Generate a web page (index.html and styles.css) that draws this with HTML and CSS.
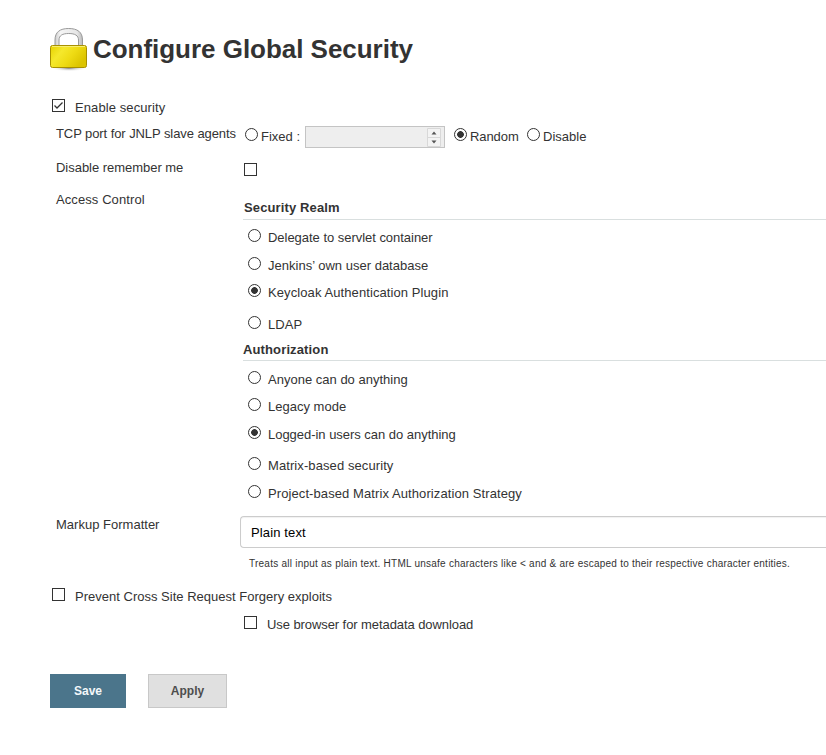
FILE: index.html
```html
<!DOCTYPE html>
<html lang="en">
<head>
<meta charset="utf-8">
<title>Configure Global Security</title>
<link rel="stylesheet" href="styles.css">
</head>
<body>
<main class="page">
  <header class="heading">
    <svg class="lock" width="40" height="44" viewBox="0 0 40 44" aria-hidden="true">
      <defs>
        <linearGradient id="brass" x1="0" y1="0" x2="1" y2="0.5">
          <stop offset="0" stop-color="#e6d200"/><stop offset=".35" stop-color="#f5e82c"/><stop offset=".65" stop-color="#eedb14"/><stop offset="1" stop-color="#dcc400"/>
        </linearGradient>
        <linearGradient id="steel" x1="0" y1="0" x2="1" y2="0">
          <stop offset="0" stop-color="#ccc"/><stop offset=".2" stop-color="#f5f5f5"/><stop offset=".8" stop-color="#e6e6e6"/><stop offset="1" stop-color="#bbb"/>
        </linearGradient>
        <radialGradient id="shade"><stop offset="0" stop-color="#777"/><stop offset="1" stop-color="#fff" stop-opacity="0"/></radialGradient>
      </defs>
      <ellipse cx="19" cy="40" rx="18" ry="3.5" fill="url(#shade)"/>
      <path d="M5 18V12C5 4 10 .5 18.700 .5S32.500 4 32.500 12V18H28.500V12C28.500 7.500 25 5.500 18.700 5.500S9 7.500 9 12V18Z" fill="url(#steel)" stroke="#999"/>
      <rect x=".5" y="17.500" width="36" height="22" rx="2" fill="url(#brass)" stroke="#a89000"/>
      <path d="M2 18.500H35" stroke="#f8ee70"/>
    </svg>
    <h1>Configure Global Security</h1>
  </header>

  <form class="settings">
    <label class="option enable"><span class="box"><svg class="tick" width="11" height="11" viewBox="0 0 11 11" aria-hidden="true"><path d="M1.500 5.500L4 8L9.500 2.500" fill="none" stroke="#333" stroke-width="1.300"/></svg></span><span class="fit-c">Enable security</span></label>

    <div class="row row-port">
      <div class="name fit-a">TCP port for JNLP slave agents</div>
      <div class="ports">
        <label class="tight"><span class="radio"></span>Fixed :</label>
        <span class="number">
          <svg width="14" height="19" viewBox="0 0 14 19" aria-hidden="true"><path d="M.5 .5H13.500V18.500H.5ZM.5 9.500H13.500" fill="#f3f3f3" stroke="#d8d8d8"/><path d="M4.500 6.500L7 3.500L9.500 6.500ZM4.500 12.500L7 15.500L9.500 12.500Z" fill="#555"/></svg>
        </span>
        <label class="tight random fit-a"><span class="radio on"></span>Random</label>
        <label class="tight disable"><span class="radio"></span>Disable</label>
      </div>
    </div>

    <div class="row row-remember">
      <div class="name fit-b">Disable remember me</div>
      <span class="box"></span>
    </div>

    <div class="row row-access">
      <div class="name fit-c">Access Control</div>
      <div class="groups">
        <section class="realm">
          <h2>Security Realm</h2>
          <label class="option"><span class="radio"></span><span class="fit-b">Delegate to servlet container</span></label>
          <label class="option"><span class="radio"></span><span>Jenkins’ own user database</span></label>
          <label class="option"><span class="radio on"></span><span class="fit-c">Keycloak Authentication Plugin</span></label>
          <label class="option"><span class="radio"></span><span class="fit-c">LDAP</span></label>
        </section>
        <section class="authorization">
          <h2>Authorization</h2>
          <label class="option"><span class="radio"></span><span>Anyone can do anything</span></label>
          <label class="option"><span class="radio"></span><span>Legacy mode</span></label>
          <label class="option"><span class="radio on"></span><span class="fit-b">Logged-in users can do anything</span></label>
          <label class="option"><span class="radio"></span><span class="fit-c">Matrix-based security</span></label>
          <label class="option"><span class="radio"></span><span class="fit-c">Project-based Matrix Authorization Strategy</span></label>
        </section>
      </div>
    </div>

    <div class="row row-markup">
      <div class="name">Markup Formatter</div>
      <div class="formatter">
        <div class="select">Plain text</div>
        <p class="help">Treats all input as plain text. HTML unsafe characters like &lt; and &amp; are escaped to their respective character entities.</p>
      </div>
    </div>

    <label class="option prevent"><span class="box"></span><span>Prevent Cross Site Request Forgery exploits</span></label>
    <label class="option metadata"><span class="box"></span><span class="fit-a">Use browser for metadata download</span></label>

    <div class="buttons">
      <button type="button" class="save">Save</button>
      <button type="button" class="apply">Apply</button>
    </div>
  </form>
</main>
</body>
</html>
```
FILE: styles.css
```css
* { box-sizing: border-box; }
body {
  margin: 0;
  background: #fff;
  color: #333;
  font: 13px/16px "Liberation Sans", Arial, sans-serif;
  letter-spacing: .01px;
  overflow: hidden;
}
.page { padding: 28px 0 0 50px; white-space: nowrap; }
.heading { display: flex; height: 72px; }
.lock { flex: none; margin-right: 3px; }
h1 { margin: 5px 0 0; font-size: 26px; line-height: 32px; letter-spacing: -.03px; }
.settings { display: flex; flex-direction: column; }

.fit-a { letter-spacing: -.08px; }
.fit-b { letter-spacing: -.03px; }
.fit-c { letter-spacing: .09px; }

.option { display: flex; height: 16px; gap: 7px; }
.radio, .box { flex: none; width: 13px; height: 13px; margin-top: -1px; border: 1px solid #333; background: #fff; }
.radio { border-radius: 50%; }
.radio.on { background: radial-gradient(circle, #333 0 3px, #fff 3.700px); }
.tick { display: block; }
.enable, .prevent { padding-left: 2px; gap: 10px; }

.row { display: flex; }
.name { flex: none; width: 188px; padding-left: 6px; }
.row-port { height: 34px; margin-top: 10px; }
.ports { display: flex; padding: 3px 0 0 7px; }
.tight { display: flex; gap: 3px; height: 16px; }
.number { display: flex; justify-content: flex-end; width: 140px; height: 22px; margin: -3px 9px 0 5px; padding: 1px 3px 0 0; border: 1px solid #c4c4c4; background: #eee; }
.tight:first-child { width: 55px; }
.random { width: 64px; }
.disable { margin-left: 9px; }
.row-remember { height: 32px; }
.row-remember .box { margin: 3px 0 0 6px; }
.row-access { height: 325px; }
.groups { flex: 1; padding: 8px 0 0 5px; }
h2 { margin: 0; height: 20px; padding-left: 1px; border-bottom: 1px solid #d9dfdf; font-size: 13px; line-height: 16px; letter-spacing: .13px; }
.groups .option { margin: 0 0 12px 5px; }
.groups h2 + .option { margin-top: 10px; }
.realm { height: 142px; }
.realm .option:nth-of-type(2) { margin-bottom: 11px; }
.realm .option:nth-of-type(3) { margin-bottom: 16px; }
.authorization h2 { height: 19px; padding-left: 0; }
.authorization .option:nth-of-type(1) { margin-bottom: 11px; }
.authorization .option:nth-of-type(3) { margin-bottom: 15px; }
.authorization h2 + .option { margin-top: 11px; }

.row-markup { height: 72px; }
.formatter { flex: 1; padding-left: 2px; }
.select { height: 32px; margin-top: -1px; padding: 8px 10px; border: 1px solid #ccc; border-right: 0; border-radius: 4px 0 0 4px; color: #000; letter-spacing: .14px; box-shadow: inset 0 1px 1px rgba(0, 0, 0, .06); }
.help { margin: 9px 0 0 9px; font-size: 10px; line-height: 14px; letter-spacing: .24px; }
.metadata { margin-top: 12px; padding-left: 194px; gap: 10px; }

.buttons { display: flex; gap: 22px; margin-top: 41px; }
button { height: 34px; padding: 0; border: 1px solid #4b758b; font: bold 12px/16px "Liberation Sans", Arial, sans-serif; }
.save { width: 76px; background: #4b758b; color: #f4f8fa; }
.apply { width: 79px; background: #e0e0e0; border-color: #c8c8c8; color: #4d4d4d; }
```
